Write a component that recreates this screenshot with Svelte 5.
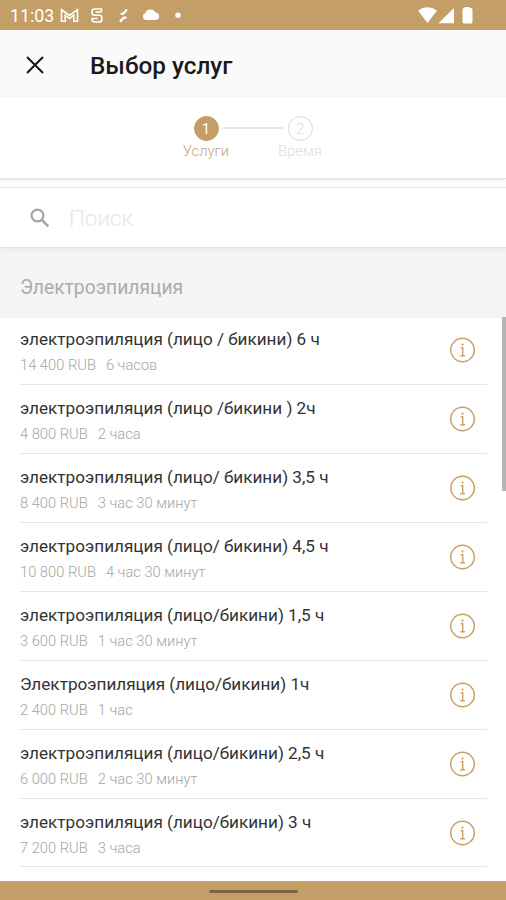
<script>
    const steps = [
        { label: 'Услуги', active: true },
        { label: 'Время', active: false }
    ];

    const services = [
        { name: 'электроэпиляция (лицо / бикини) 6 ч', price: '14 400 RUB', duration: '6 часов' },
        { name: 'электроэпиляция (лицо /бикини ) 2ч', price: '4 800 RUB', duration: '2 часа' },
        { name: 'электроэпиляция (лицо/ бикини) 3,5 ч', price: '8 400 RUB', duration: '3 час 30 минут' },
        { name: 'электроэпиляция (лицо/ бикини) 4,5 ч', price: '10 800 RUB', duration: '4 час 30 минут' },
        { name: 'электроэпиляция (лицо/бикини) 1,5 ч', price: '3 600 RUB', duration: '1 час 30 минут' },
        { name: 'Электроэпиляция (лицо/бикини) 1ч', price: '2 400 RUB', duration: '1 час' },
        { name: 'электроэпиляция (лицо/бикини) 2,5 ч', price: '6 000 RUB', duration: '2 час 30 минут' },
        { name: 'электроэпиляция (лицо/бикини) 3 ч', price: '7 200 RUB', duration: '3 часа' }
    ];

    let query = $state('');
</script>

<div class="screen">
    <div class="status-bar">
        <span class="clock">11:03</span>
        <svg class="notifications" width="130" height="30" viewBox="0 0 130 30" fill="none" stroke="#fff">
            <path d="M2.500 21.200V9.500L10.500 15.500L18.500 9.500V21.200H14.800V15.200L10.500 18.600L6.200 15.200V21.200Z" stroke-width="1.600" />
            <path d="M42.500 12V9H35.500Q33 9 33 11.500V13Q33 15.200 35.500 15.200H40.500Q42.800 15.200 42.800 17.500V19.500Q42.800 22 40.300 22H36Q33 22 33 19V18.500H38.500M36.500 12H42.500" stroke-width="1.600" />
            <path d="M62.500 13.800H64L67.300 10.500M61.500 21L65 17.600H66.800M67 11V10M62 20V21.200" stroke-width="2.200" stroke-linecap="round" />
            <path d="M86.500 20A3.800 3.800 0 0 1 86.200 12.900A5.800 5.800 0 0 1 96.500 12.600A3.750 3.750 0 0 1 97.200 20Z" fill="#fff" stroke="none" />
            <circle cx="119" cy="15.300" r="2.700" fill="#fff" stroke="none" />
        </svg>
        <svg class="system" width="56" height="30" viewBox="0 0 56 30" fill="#fff">
            <path d="M0 10.500Q9.500 4 19 10.500L9.500 23Z" />
            <path d="M36 8V23.300H20.500Z" />
            <path d="M46.500 8V7H51.500V8H53Q54.500 8 54.500 9.500V22Q54.500 23.400 53 23.400H46Q44.500 23.400 44.500 22V9.500Q44.500 8 46 8Z" />
        </svg>
    </div>

    <header>
        <button class="close" aria-label="Закрыть">
            <svg width="18" height="18" viewBox="0 0 18 18" stroke="#111" stroke-width="1.900">
                <path d="M1 1L17 17M17 1L1 17" />
            </svg>
        </button>
        <h1>Выбор услуг</h1>
    </header>

    <div class="steps">
        {#each steps as step, i}
            {#if i > 0}
                <span class="connector"></span>
            {/if}
            <div class="step" class:active={step.active}>
                <span class="number">{i + 1}</span>
                <span class="label">{step.label}</span>
            </div>
        {/each}
    </div>

    <label class="search">
        <svg width="20" height="20" viewBox="0 0 20 20" fill="none" stroke="#a3a3a3" stroke-width="2.100">
            <circle cx="7.500" cy="7.500" r="5.900" />
            <path d="M11.800 11.800L18.300 18.300" stroke-width="2.500" />
        </svg>
        <input type="text" placeholder="Поиск" bind:value={query} />
    </label>

    <h2>Электроэпиляция</h2>

    <div class="list">
        {#each services as service}
            <div class="service">
                <div class="info">
                    <div class="name">{service.name}</div>
                    <div class="meta">
                        <span>{service.price}</span>
                        <span>{service.duration}</span>
                    </div>
                </div>
                <svg class="details" width="26" height="26" viewBox="0 0 26 26" fill="none" stroke="#c8a068">
                    <circle cx="12.500" cy="13" r="11.800" stroke-width="1.500" />
                    <path d="M10.700 10.800H12.700V18.800M10.300 18.800H14.900" stroke-width="1.400" />
                    <circle cx="12.500" cy="7.600" r="1.100" fill="#c8a068" stroke="none" />
                </svg>
            </div>
        {/each}
        <span class="scrollbar"></span>
    </div>

    <div class="nav-bar"><span></span></div>
</div>

<style>
    :global(body) {
        margin: 0;
    }

    .screen {
        display: flex;
        flex-direction: column;
        width: 506px;
        height: 900px;
        overflow: hidden;
        background: #fff;
        font-family: Roboto, "Noto Sans", sans-serif;
    }

    .status-bar {
        display: flex;
        flex: 0 0 30px;
        min-height: 0;
        box-sizing: border-box;
        padding: 0 32px 0 10px;
        background: #c39e67;
        color: #fff;
    }

    .clock {
        width: 49px;
        font-size: 17.8px;
        line-height: 32px;
    }

    .system {
        margin-left: auto;
    }

    header {
        display: flex;
        align-items: center;
        flex: 0 0 67px;
        box-sizing: border-box;
        padding: 3px 26px 0;
        background: #fafafa;
    }

    .close {
        display: flex;
        padding: 0;
        border: 0;
        background: none;
    }

    h1 {
        margin: 2px 0 0 46px;
        color: #1a1a1a;
        font-size: 24.3px;
        font-weight: 500;
        line-height: 30px;
    }

    .steps {
        display: flex;
        justify-content: center;
        flex: 0 0 82px;
        box-sizing: border-box;
        padding-top: 19px;
        border-bottom: 1px solid #e2e2e2;
        box-shadow: 0 1px 3px #e4e4e4;
    }

    .step {
        display: flex;
        flex-direction: column;
        align-items: center;
        width: 60px;
        color: #dedede;
        font-size: 14.8px;
        font-weight: 300;
    }

    .number {
        box-sizing: border-box;
        width: 25px;
        height: 25px;
        border: 1.5px solid #d9d9d9;
        border-radius: 50%;
        line-height: 24px;
        text-align: center;
    }

    .label {
        margin-top: 2px;
        line-height: 16px;
    }

    .active {
        color: #c8a574;
    }

    .active .number {
        border-color: #c39e67;
        background: #c39e67;
        color: #fff;
        font-weight: 400;
    }

    .connector {
        width: 60px;
        height: 2px;
        margin: 11px -13px 0;
        background: #e9e9e9;
    }

    .search {
        display: flex;
        align-items: center;
        flex: 0 0 61px;
        box-sizing: border-box;
        margin-top: 8px;
        padding-left: 30px;
        border-top: 1px solid #e6e6e6;
        border-bottom: 1px solid #e3e3e3;
        background: #fff;
        box-shadow: 0 2px 4px #e8e8e8;
        z-index: 1;
    }

    input {
        width: 300px;
        margin-left: 19px;
        padding: 0;
        border: 0;
        outline: 0;
        font: 300 22.4px Roboto, "Noto Sans", sans-serif;
    }

    input::placeholder {
        color: #e6e6e6;
    }

    h2 {
        flex: 0 0 70px;
        box-sizing: border-box;
        margin: 0;
        padding: 10px 20px 0;
        background: #f4f4f4;
        color: #ababab;
        font-size: 19.3px;
        font-weight: 400;
        line-height: 60px;
    }

    .list {
        position: relative;
        flex: 1;
        min-height: 0;
        overflow: hidden;
        padding: 0 19px 0 20px;
        margin-top: -1.6px;
    }

    .service {
        display: flex;
        justify-content: space-between;
        box-sizing: border-box;
        height: 68.88px;
        padding: 12px 11px 0 0;
        border-bottom: 1px solid #e8e8e8;
    }

    .name {
        color: #333;
        font-size: 17.15px;
        line-height: 22px;
        white-space: nowrap;
    }

    .meta {
        display: flex;
        gap: 10px;
        margin-top: 6px;
        color: #a6a6a6;
        font-size: 14.7px;
        font-weight: 300;
        line-height: 18px;
    }

    .details {
        margin-top: 9px;
    }

    .scrollbar {
        position: absolute;
        top: 1px;
        right: 0;
        width: 4px;
        height: 174px;
        background: #b5b5b5;
    }

    .nav-bar {
        display: flex;
        align-items: center;
        justify-content: center;
        flex: 0 0 19px;
        background: #c39e67;
    }

    .nav-bar span {
        width: 89px;
        height: 3px;
        margin-top: 2px;
        border-radius: 2px;
        background: #7a6543;
    }
</style>
